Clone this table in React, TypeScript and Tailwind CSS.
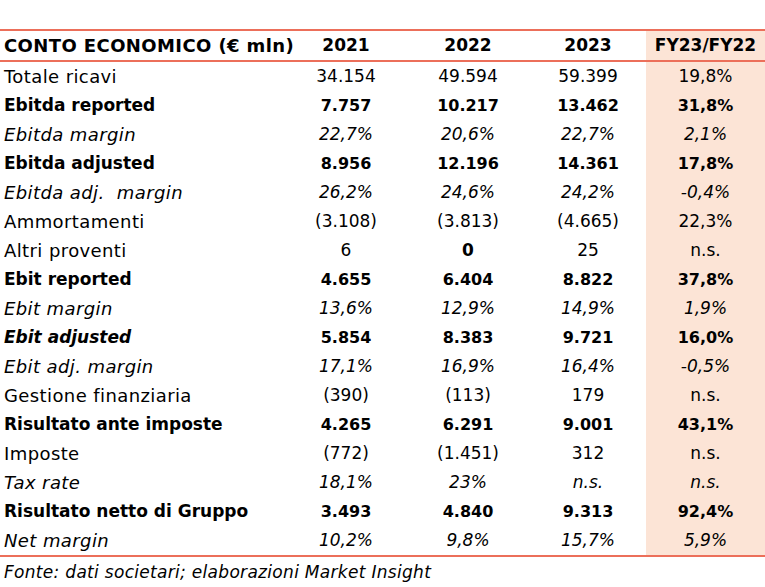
type Row = {
  label: string
  vals: string[]
  kind: "normal" | "bold" | "italic" | "boldLabelItalic"
  boldCells?: number[]
}

const rows: Row[] = [
  { label: "Totale ricavi", vals: ["34.154", "49.594", "59.399", "19,8%"], kind: "normal" },
  { label: "Ebitda reported", vals: ["7.757", "10.217", "13.462", "31,8%"], kind: "bold" },
  { label: "Ebitda margin", vals: ["22,7%", "20,6%", "22,7%", "2,1%"], kind: "italic" },
  { label: "Ebitda adjusted", vals: ["8.956", "12.196", "14.361", "17,8%"], kind: "bold" },
  { label: "Ebitda adj.  margin", vals: ["26,2%", "24,6%", "24,2%", "-0,4%"], kind: "italic" },
  { label: "Ammortamenti", vals: ["(3.108)", "(3.813)", "(4.665)", "22,3%"], kind: "normal" },
  { label: "Altri proventi", vals: ["6", "0", "25", "n.s."], kind: "normal", boldCells: [1] },
  { label: "Ebit reported", vals: ["4.655", "6.404", "8.822", "37,8%"], kind: "bold" },
  { label: "Ebit margin", vals: ["13,6%", "12,9%", "14,9%", "1,9%"], kind: "italic" },
  { label: "Ebit adjusted", vals: ["5.854", "8.383", "9.721", "16,0%"], kind: "boldLabelItalic" },
  { label: "Ebit adj. margin", vals: ["17,1%", "16,9%", "16,4%", "-0,5%"], kind: "italic" },
  { label: "Gestione finanziaria", vals: ["(390)", "(113)", "179", "n.s."], kind: "normal" },
  { label: "Risultato ante imposte", vals: ["4.265", "6.291", "9.001", "43,1%"], kind: "bold" },
  { label: "Imposte", vals: ["(772)", "(1.451)", "312", "n.s."], kind: "normal" },
  { label: "Tax rate", vals: ["18,1%", "23%", "n.s.", "n.s."], kind: "italic" },
  { label: "Risultato netto di Gruppo", vals: ["3.493", "4.840", "9.313", "92,4%"], kind: "bold" },
  { label: "Net margin", vals: ["10,2%", "9,8%", "15,7%", "5,9%"], kind: "italic" },
]

const cols = "grid grid-cols-[286px_120px_124px_116px_119px]"

export default function App() {
  return (
    <div className="w-[765px] h-[587px] bg-white text-black font-['DejaVu_Sans',sans-serif] pt-[29px]">
      <div className="border-t-2 border-b-2 border-[#ec6f5a]">
        <div className={`${cols} h-[29px] items-center font-bold text-[17px]`}>
          <div className="pl-1 whitespace-nowrap text-[18px] tracking-[0.4px]">CONTO ECONOMICO (€ mln)</div>
          <div className="text-center">2021</div>
          <div className="text-center">2022</div>
          <div className="text-center">2023</div>
          <div className="text-center bg-[#fce4d6] h-full flex items-center justify-center">FY23/FY22</div>
        </div>
      </div>
      <div className="border-b-2 border-[#ec6f5a]">
        {rows.map((r) => {
          const isBold = r.kind === "bold" || r.kind === "boldLabelItalic"
          const labelCls =
            r.kind === "bold"
              ? "font-bold text-[17px]"
              : r.kind === "boldLabelItalic"
                ? "font-bold italic text-[17px]"
                : r.kind === "italic"
                  ? "italic text-[18px] tracking-[0.4px]"
                  : "text-[18px] tracking-[0.4px]"
          const valCls = isBold ? "font-bold text-[16px]" : r.kind === "italic" ? "italic text-[17px]" : "text-[17px]"
          return (
            <div key={r.label} className={`${cols} h-[29px] items-center`}>
              <div className={`pl-1 whitespace-pre ${labelCls}`}>{r.label}</div>
              {r.vals.map((v, i) => (
                <div
                  key={i}
                  className={`h-full flex items-center justify-center ${valCls} ${
                    r.boldCells?.includes(i) ? "font-bold" : ""
                  } ${i === 3 ? "bg-[#fce4d6]" : ""}`}
                >
                  {v}
                </div>
              ))}
            </div>
          )
        })}
      </div>
      <div className="pl-1 pt-[3px] italic text-[17px] tracking-[0.3px]">
        Fonte: dati societari; elaborazioni Market Insight
      </div>
    </div>
  )
}
